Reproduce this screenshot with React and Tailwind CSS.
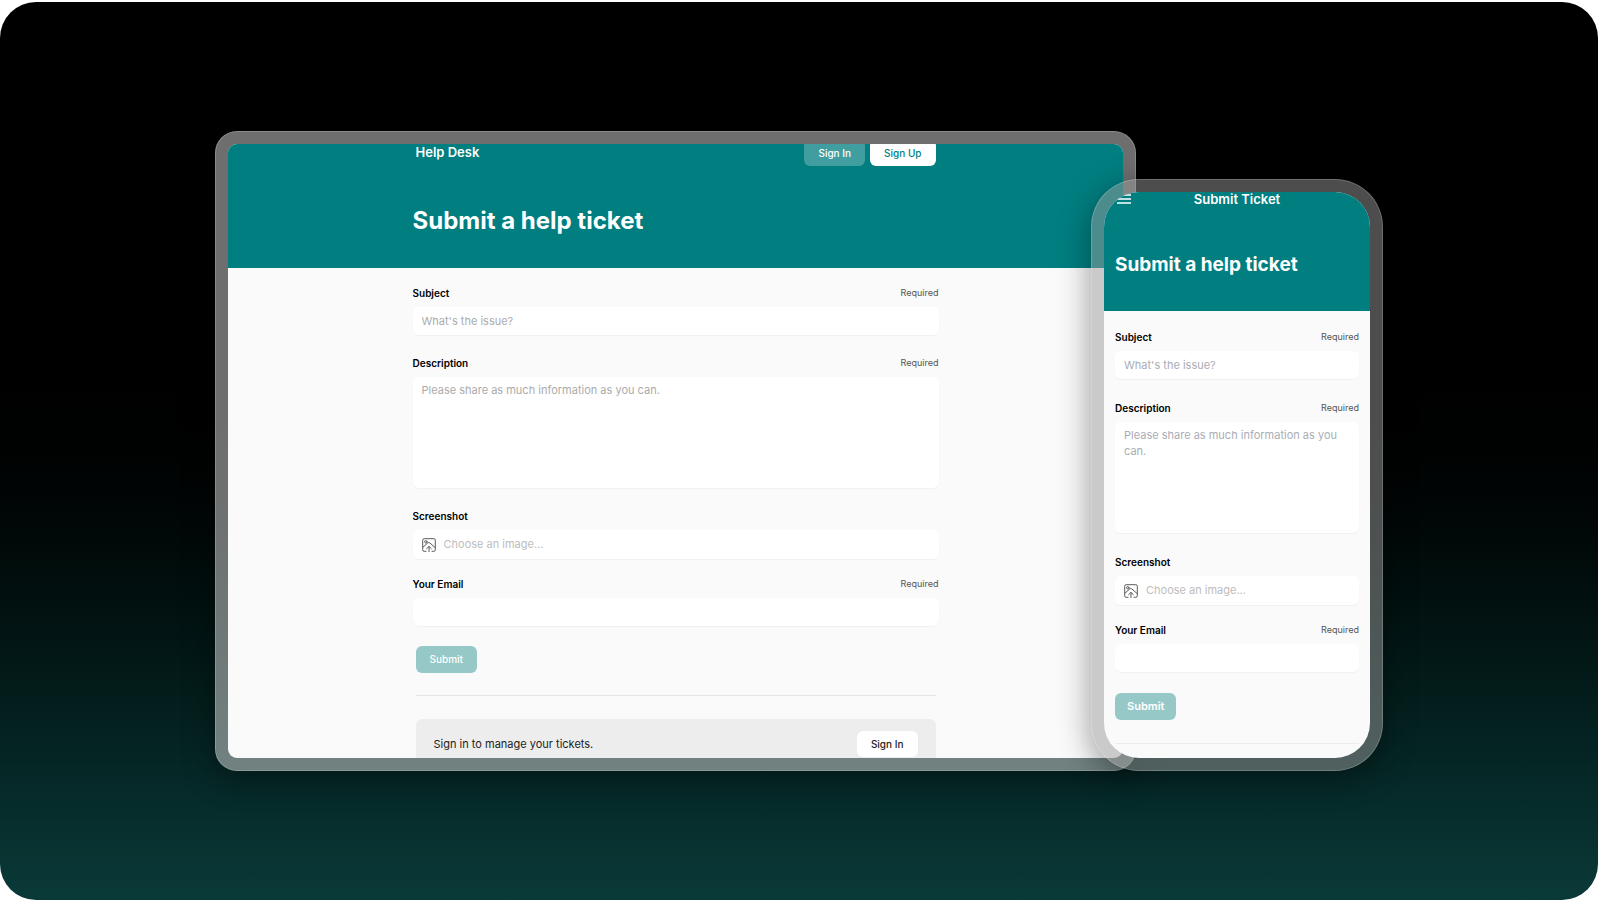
import React, { useId } from "react";

/* =========================
   Icons
========================= */
function ImageUploadIcon() {
  return (
    <svg
      viewBox="0 0 14 14"
      className="size-3.5 shrink-0 text-[#5a5a5a]"
      fill="none"
      stroke="currentColor"
      strokeLinecap="round"
      strokeLinejoin="round"
      aria-hidden="true"
    >
      <path d="M4 13.300H2.200A1.500 1.500 0 0 1 .700 11.800V2.200A1.500 1.500 0 0 1 2.200.700h9.600a1.500 1.500 0 0 1 1.500 1.500v9.600a1.500 1.500 0 0 1-1.500 1.500H10" />
      <circle cx="3.800" cy="3.800" r="1.200" />
      <path d="M.9 9.200 5.800 4.900q1-.7 2 0L13.200 9.600" />
      <path d="M7 13.600V8.600M4.700 10.600 7 8.400l2.300 2.200" />
    </svg>
  );
}

function MenuIcon() {
  return (
    <svg viewBox="0 0 14 10" className="h-2.5 w-3.5" stroke="currentColor" strokeWidth="1.4" aria-hidden="true">
      <path d="M0 1h14M0 5h14M0 9h14" />
    </svg>
  );
}

/* =========================
   Form
========================= */
const fieldBox = "w-full rounded-md bg-white shadow-[0_1px_1px_rgba(0,0,0,0.04)]";
const inputText = "px-[9px] text-[11px] text-black outline-none";

function Field({ id, label, required, children }) {
  return (
    <div className="flex flex-col gap-1.5">
      <div className="flex h-4 items-center justify-between">
        <label htmlFor={id} className="text-[10px] font-semibold text-black">
          {label}
        </label>
        {required && <span className="text-[9px] text-[#555]">Required</span>}
      </div>
      {children}
    </div>
  );
}

function TicketForm({ gap, placeholder, submit }) {
  const id = useId();

  return (
    <form className={`flex flex-col ${gap}`} onSubmit={(e) => e.preventDefault()}>
      <Field id={`${id}-subject`} label="Subject" required>
        <input
          id={`${id}-subject`}
          type="text"
          placeholder="What's the issue?"
          className={`${fieldBox} ${inputText} ${placeholder} h-7`}
        />
      </Field>

      <Field id={`${id}-description`} label="Description" required>
        <textarea
          id={`${id}-description`}
          placeholder="Please share as much information as you can."
          className={`${fieldBox} ${inputText} ${placeholder} block h-[111px] resize-none py-[5px] leading-4`}
        />
      </Field>

      <div className="flex flex-col gap-[17px]">
        <Field id={`${id}-screenshot`} label="Screenshot">
          <div className={`${fieldBox} relative flex h-[29px] items-center gap-2 px-[9px]`}>
            <ImageUploadIcon />
            <span className="text-[11px] text-[#bdbdbd]">Choose an image...</span>
            <input
              id={`${id}-screenshot`}
              type="file"
              accept="image/*"
              className="absolute inset-0 cursor-pointer opacity-0"
            />
          </div>
        </Field>

        <Field id={`${id}-email`} label="Your Email" required>
          <input id={`${id}-email`} type="email" className={`${fieldBox} ${inputText} h-7`} />
        </Field>
      </div>

      <button type="submit" className={`h-[27px] self-start rounded-md bg-[#96c8c8] text-white ${submit}`}>
        Submit
      </button>
    </form>
  );
}

/* =========================
   Screens
========================= */
function DesktopScreen() {
  return (
    <div className="h-full overflow-hidden rounded-[9px] bg-[#fafafa]">
      <header className="flow-root h-[124px] bg-[#007e80] text-white">
        <div className="mx-auto -mt-1 flex h-[26px] w-full max-w-[520px] items-center justify-between">
          <span className="text-[13px] font-semibold">Help Desk</span>
          <div className="flex h-full gap-[5px]">
            <button type="button" className="rounded-md bg-white/25 px-3.5 text-[10px] font-medium">
              Sign In
            </button>
            <button type="button" className="rounded-md bg-white px-3.5 text-[10px] font-medium text-[#007e80]">
              Sign Up
            </button>
          </div>
        </div>
        <h1 className="mx-auto mt-[39px] max-w-[526px] text-2xl leading-8 font-bold">Submit a help ticket</h1>
      </header>

      <main className="mx-auto max-w-[526px] pt-[17px]">
        <TicketForm
          gap="gap-5"
          placeholder="placeholder:text-[#ababab]"
          submit="ml-[3px] px-3.5 text-[10px] font-medium"
        />
        <div className="mx-[3px] mt-[22px] border-t border-[#e5e5e5] pt-[23px]">
          <div className="flex items-center justify-between rounded-md bg-[#ededed] px-[18px] py-3">
            <p className="text-[11px] text-[#222]">Sign in to manage your tickets.</p>
            <button type="button" className="h-[26px] rounded-md bg-white px-3.5 text-[10px] font-medium text-[#222]">
              Sign In
            </button>
          </div>
        </div>
      </main>
    </div>
  );
}

function PhoneScreen() {
  return (
    <div className="h-full overflow-hidden rounded-[35px] bg-[#fafafa]">
      <header className="h-[119px] bg-[#007e80] px-[11px] text-white">
        <div className="grid h-3.5 grid-cols-[1fr_auto_1fr] items-center">
          <button type="button" aria-label="Open menu" className="pl-0.5">
            <MenuIcon />
          </button>
          <span className="text-[13px] leading-[14px] font-semibold">Submit Ticket</span>
        </div>
        <h1 className="mt-[47px] text-[19px] leading-6 font-bold">Submit a help ticket</h1>
      </header>

      <main className="px-[11px] pt-[18px]">
        <TicketForm
          gap="gap-[21px]"
          placeholder="placeholder:text-[#a9adb5]"
          submit="px-3 text-[11px] font-semibold"
        />
        <div className="mt-[23px] border-t border-[#ececec]" />
      </main>
    </div>
  );
}

export default function App() {
  return (
    <div className="flex min-h-screen bg-white pt-0.5 pr-0.5 pb-0.5 font-['Inter',sans-serif]">
      <section className="flex flex-1 items-center justify-center rounded-[36px] bg-linear-to-b from-black from-33% to-[#0a3a38]">
        <div className="flex w-full max-w-[1168px] items-end">
          <div className="aspect-[921/640] flex-1 rounded-[22px] border border-white/20 bg-[#dcdcdc]/50 p-3 shadow-[0_8px_32px_rgba(0,0,0,0.4)]">
            <DesktopScreen />
          </div>
          <div className="z-10 -ml-[45px] aspect-[292/592] w-[292px] shrink-0 rounded-[48px] border border-white/20 bg-[#999]/50 p-3 shadow-[0_8px_32px_rgba(0,0,0,0.4)]">
            <PhoneScreen />
          </div>
        </div>
      </section>
    </div>
  );
}
